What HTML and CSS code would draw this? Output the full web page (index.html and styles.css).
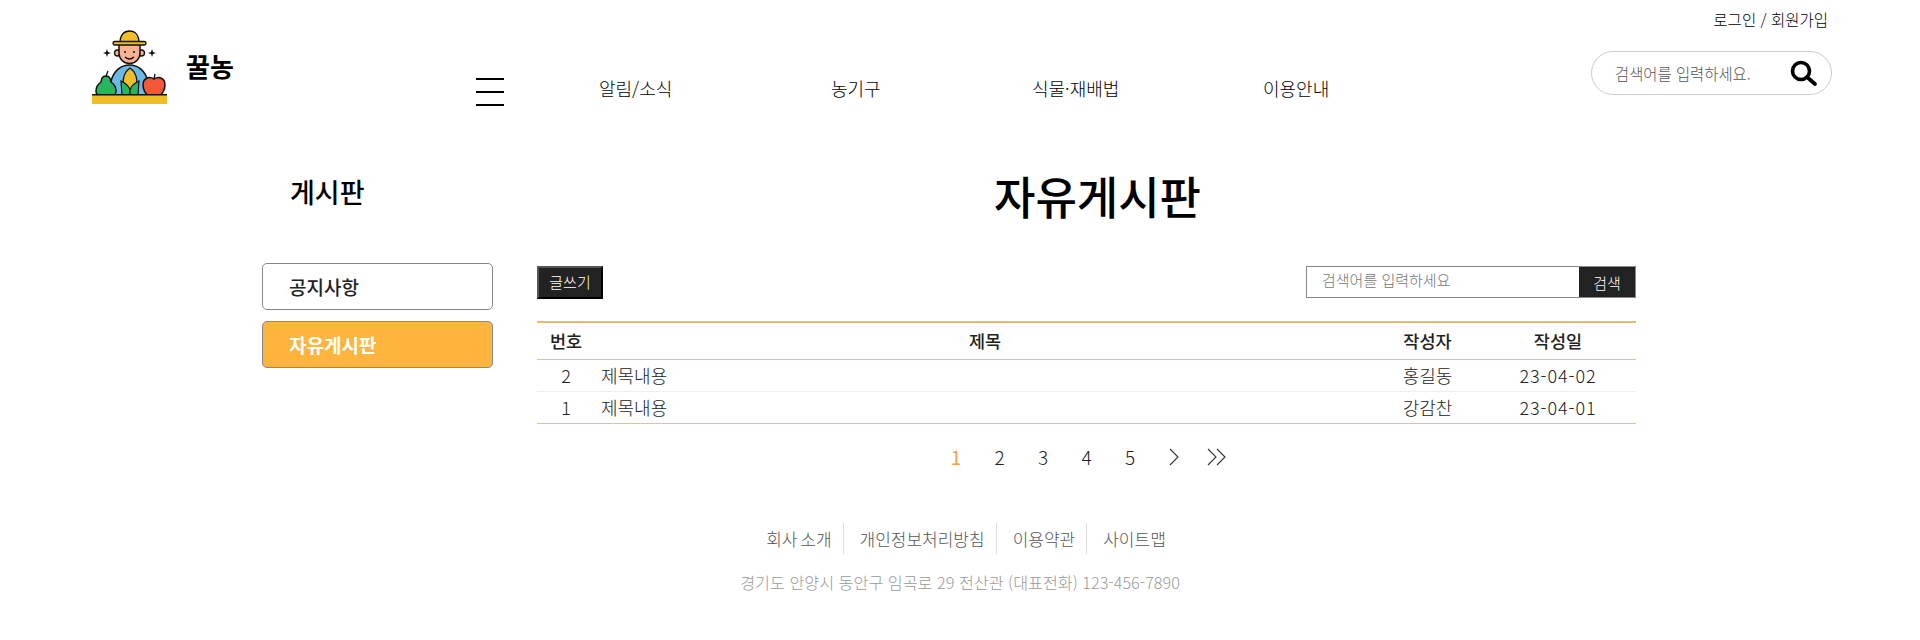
FILE: index.html
```html
<!DOCTYPE html>
<html lang="ko">
<head>
  <meta charset="UTF-8">
  <meta name="viewport" content="width=device-width, initial-scale=1.0">
  <title>자유게시판</title>
  <link rel="stylesheet" href="styles.css">
</head>
<body>
  <div class="util"><a href="#">로그인</a> / <a href="#">회원가입</a></div>

  <header class="header">
    <a href="#" class="logo">
      <svg class="logo-img" viewBox="0 0 75 75" width="75" height="75">
        <!-- body -->
        <path d="M19 65V52C21 41 29 35 37.500 35S54 41 56 52V65Z" fill="#6bb9e6" stroke="#111" stroke-width="1.500"/>
        <!-- head -->
        <circle cx="25.500" cy="23" r="3" fill="#f9b295" stroke="#111" stroke-width="1.300"/>
        <circle cx="49.500" cy="23" r="3" fill="#f9b295" stroke="#111" stroke-width="1.300"/>
        <path d="M27 14H48V23A10.500 10.500 0 0 1 27 23Z" fill="#f9b295" stroke="#111" stroke-width="1.500"/>
        <circle cx="33" cy="22" r="1" fill="#111"/>
        <circle cx="42" cy="22" r="1" fill="#111"/>
        <path d="M33 27Q37.500 31 42 27" fill="none" stroke="#111" stroke-width="1.300"/>
        <!-- hat -->
        <path d="M28 13C28 5 32 1 37.500 1S47 5 47 13Z" fill="#f0bd2b" stroke="#111" stroke-width="1.300"/>
        <rect x="21" y="11.500" width="33" height="3.500" rx="1.700" fill="#f0bd2b" stroke="#111" stroke-width="1.300"/>
        <!-- sparkles -->
        <path d="M15 19L16 22L19 23L16 24L15 27L14 24L11 23L14 22Z" fill="#111"/>
        <path d="M60 19L61 22L64 23L61 24L60 27L59 24L56 23L59 22Z" fill="#111"/>
        <!-- corn -->
        <path d="M38 38C32 42 30 50 32 55L38 60L44 55C46 50 44 42 38 38Z" fill="#f0bd2b" stroke="#111" stroke-width="1.200"/>
        <path d="M29 51C33 53 37 56 38 60V65H30Z" fill="#27b55f" stroke="#111" stroke-width="1.200"/>
        <path d="M47 51C43 53 39 56 38 60V65H46Z" fill="#27b55f" stroke="#111" stroke-width="1.200"/>
        <!-- pear -->
        <path d="M14 46C10 46 9.500 49 9 52C6 54 4 57 4 61C4 63 5 65 7 65H21C23 65 24 63 24 61C24 57 22 54 19 52C18.500 49 18 46 14 46Z" fill="#27b55f" stroke="#111" stroke-width="1.500"/>
        <path d="M14 46L16 41" fill="none" stroke="#111" stroke-width="1.300"/>
        <!-- apple -->
        <path d="M62 49C57 46 51 48 51 55C51 60 54 65 57 65H67C70 65 73 60 73 55C73 48 67 46 62 49Z" fill="#f4583a" stroke="#111" stroke-width="1.500"/>
        <path d="M62 49L63 44" fill="none" stroke="#111" stroke-width="1.300"/>
        <!-- stand -->
        <rect x="0" y="64" width="75" height="10" fill="#f0bd25"/>
        <rect x="0" y="64" width="75" height="1.500" fill="#111"/>
      </svg>
      <span class="logo-text">꿀농</span>
    </a>

    <button class="menu-btn" aria-label="메뉴"><span></span><span></span><span></span></button>

    <nav class="nav">
      <a href="#">알림/소식</a>
      <a href="#">농기구</a>
      <a href="#">식물·재배법</a>
      <a href="#">이용안내</a>
    </nav>

    <form class="top-search">
      <input type="text" placeholder="검색어를 입력하세요.">
      <svg viewBox="0 0 30 30" width="30" height="30">
        <circle cx="13" cy="13" r="8.500" fill="none" stroke="#000" stroke-width="3.600"/>
        <path d="M19 19L27 26" stroke="#000" stroke-width="3.800" stroke-linecap="round"/>
      </svg>
    </form>
  </header>

  <main class="board">
    <aside class="side">
      <h2 class="side-title">게시판</h2>
      <a href="#" class="side-link">공지사항</a>
      <a href="#" class="side-link active">자유게시판</a>
    </aside>

    <section class="content">
      <h1 class="page-title">자유게시판</h1>

      <div class="toolbar">
        <button class="write-btn">글쓰기</button>
        <form class="board-search">
          <input type="text" placeholder="검색어를 입력하세요">
          <button type="button">검색</button>
        </form>
      </div>

      <table class="list">
        <thead>
          <tr>
            <th class="col-no">번호</th>
            <th>제목</th>
            <th class="col-writer">작성자</th>
            <th class="col-date">작성일</th>
          </tr>
        </thead>
        <tbody>
          <tr>
            <td class="center">2</td>
            <td class="subject">제목내용</td>
            <td class="center">홍길동</td>
            <td class="center date">23-04-02</td>
          </tr>
          <tr>
            <td class="center">1</td>
            <td class="subject">제목내용</td>
            <td class="center">강감찬</td>
            <td class="center date">23-04-01</td>
          </tr>
        </tbody>
      </table>

      <div class="paging">
        <a href="#" class="current">1</a>
        <a href="#">2</a>
        <a href="#">3</a>
        <a href="#">4</a>
        <a href="#">5</a>
        <a href="#"><svg viewBox="0 0 12 18" width="12" height="18"><path d="M2 1L10 9L2 17" fill="none" stroke="#333" stroke-width="1.100"/></svg></a>
        <a href="#"><svg viewBox="0 0 22 18" width="22" height="18"><path d="M2 1L10 9L2 17M11 1L19 9L11 17" fill="none" stroke="#333" stroke-width="1.100"/></svg></a>
      </div>
    </section>
  </main>

  <footer class="footer">
    <ul class="foot-links">
      <li><a href="#">회사 소개</a></li>
      <li><a href="#">개인정보처리방침</a></li>
      <li><a href="#">이용약관</a></li>
      <li><a href="#">사이트맵</a></li>
    </ul>
    <p class="address">경기도 안양시 동안구 임곡로 29 전산관 (대표전화) 123-456-7890</p>
  </footer>
</body>
</html>
```

FILE: styles.css
```css
* {
  box-sizing: border-box;
}

body {
  margin: 0;
  font-family: "Noto Sans CJK KR", "Noto Sans", sans-serif;
  color: #222;
  background-color: #fff;
}

a {
  color: inherit;
  text-decoration: none;
}

h1, h2, p, ul {
  margin: 0;
  padding: 0;
}

/* Header */
.util {
  height: 30px;
  padding: 9px 92px 0 0;
  font-size: 15.500px;
  line-height: 20px;
  font-weight: 300;
  text-align: right;
  color: #000;
}

.header {
  display: flex;
  height: 80px;
  padding-left: 92px;
}

.logo {
  display: flex;
  width: 384px;
}

.logo-text {
  margin: 18px 0 0 19px;
  font-size: 26px;
  line-height: 36px;
  font-weight: 700;
  color: #000;
}

.menu-btn {
  display: flex;
  flex-direction: column;
  justify-content: space-between;
  width: 28px;
  height: 28px;
  margin-top: 48px;
  padding: 0;
  border: none;
  background: none;
}

.menu-btn span {
  display: block;
  height: 2px;
  background-color: #000;
}

.nav {
  display: flex;
  margin: 45px 0 0 95px;
  font-size: 18px;
  line-height: 26px;
  font-weight: 300;
  color: #000;
}

.nav a:nth-child(1) { width: 232px; }
.nav a:nth-child(2) { width: 201px; }
.nav a:nth-child(3) { width: 231px; }
.nav a:nth-child(4) { width: 328px; }

.top-search {
  display: flex;
  align-items: center;
  width: 241px;
  height: 44px;
  margin-top: 21px;
  padding-left: 23px;
  border: 1px solid #ccc;
  border-radius: 22px;
}

.top-search input {
  width: 173px;
  border: none;
  outline: none;
  padding: 0;
  font-family: inherit;
  font-size: 15.400px;
  font-weight: 300;
  color: #333;
}

.top-search input::placeholder {
  color: #555;
}

/* Board */
.board {
  display: flex;
  gap: 44px;
  padding-left: 262px;
}

.side {
  width: 231px;
}

.side-title {
  height: 153px;
  padding: 63px 0 0 28px;
  font-size: 27px;
  line-height: 38px;
  font-weight: 500;
  color: #000;
}

.side-link {
  display: block;
  height: 47px;
  margin-top: 11px;
  padding-left: 26px;
  border: 1px solid #888;
  border-radius: 5px;
  font-size: 19px;
  line-height: 45px;
  font-weight: 500;
}

.side-link:first-of-type {
  margin-top: 0;
}

.side-link.active {
  background-color: #fdb53d;
  color: #fff;
  font-weight: 700;
}

.content {
  width: 1099px;
}

.page-title {
  height: 156px;
  padding: 53px 0 0 22px;
  font-size: 45px;
  line-height: 66px;
  font-weight: 500;
  text-align: center;
  color: #000;
}

.toolbar {
  display: flex;
  justify-content: space-between;
  height: 55px;
}

.write-btn {
  width: 66px;
  height: 33px;
  padding: 0 0 2px;
  border: 2px outset #555;
  background-color: #222;
  color: #fff;
  font-family: inherit;
  font-size: 15px;
  font-weight: 300;
}

.board-search {
  display: flex;
  width: 330px;
  height: 32px;
  border: 1px solid #888;
}

.board-search input {
  flex: 1;
  min-width: 0;
  padding: 0 15px 5px;
  border: none;
  outline: none;
  font-family: inherit;
  font-size: 15px;
  font-weight: 300;
}

.board-search button {
  width: 56px;
  padding: 0;
  border: none;
  background-color: #222;
  color: #fff;
  font-family: inherit;
  font-size: 15px;
  font-weight: 300;
}

.list {
  width: 100%;
  border-collapse: collapse;
  table-layout: fixed;
  border-top: 2px solid #e5bd69;
  border-bottom: 1px solid #e5c67f;
}

.list th {
  height: 37px;
  padding: 0;
  border-bottom: 1px solid #e5c67f;
  font-size: 17.500px;
  font-weight: 500;
}

.list td {
  height: 32px;
  padding: 0;
  font-size: 18px;
  font-weight: 300;
  border-bottom: 1px solid #eee;
}

.list tbody tr:last-child td {
  border-bottom: none;
}

.col-no { width: 58px; }
.col-writer { width: 105px; }
.col-date { width: 156px; }

.center {
  text-align: center;
}

.list .date {
  letter-spacing: 0.900px;
}

.list .subject {
  padding-left: 6px;
}

.paging {
  display: flex;
  align-items: center;
  justify-content: center;
  gap: 28.500px;
  height: 24px;
  margin: 21px 0 0;
  font-size: 19px;
  font-weight: 300;
  color: #222;
}

.paging a {
  display: flex;
  justify-content: center;
  width: 15px;
}

.paging svg {
  flex-shrink: 0;
}

.paging .current {
  color: #f7a145;
  font-weight: 400;
}

/* Footer */
.footer {
  padding-top: 54px;
  text-align: center;
}

.foot-links {
  display: flex;
  justify-content: center;
  padding-left: 7px;
  list-style: none;
  font-size: 17px;
  line-height: 31px;
  font-weight: 300;
  word-spacing: -2px;
  color: #555;
}

.foot-links li {
  padding: 0 11px 0 16px;
  border-left: 1px solid #ddd;
}

.foot-links li:first-child {
  border-left: none;
}

.address {
  margin-top: 16px;
  font-size: 16.200px;
  line-height: 24px;
  font-weight: 300;
  color: #999;
}
```
